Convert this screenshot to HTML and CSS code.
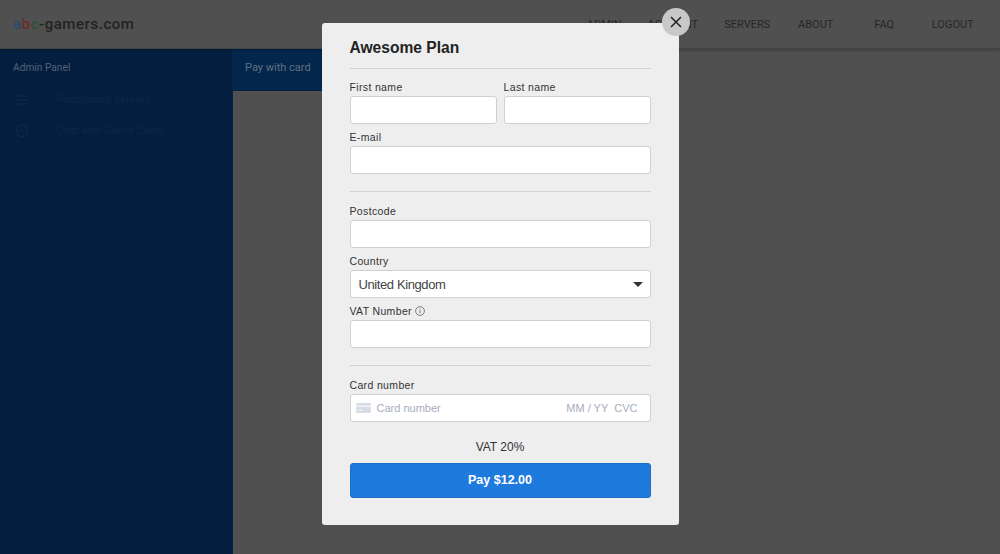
FILE: index.html
```html
<!DOCTYPE html>
<html lang="en">
<head>
    <meta charset="UTF-8">
    <meta name="viewport" content="width=device-width, initial-scale=1.0">
    <title>abc-gamers.com</title>
    <link rel="stylesheet" href="styles.css">
</head>
<body>
    <header id="navbar">
        <div id="logo"><span class="blue">a</span><span class="red">b</span><span class="green">c</span>-gamers.com</div>
        <nav id="links">
            <a href="">ADMIN</a>
            <a href="" class="tight">ACCOUNT</a>
            <a href="">SERVERS</a>
            <a href="">ABOUT</a>
            <a href="">FAQ</a>
            <a href="">LOGOUT</a>
        </nav>
    </header>

    <div id="main">
        <aside id="sidebar">
            <p class="side-title">Admin Panel</p>
            <div class="side-item">
                <svg width="14" height="10" viewBox="0 0 14 10"><path d="M1 1h12M1 5h12M1 9h12" stroke="#0c2748" stroke-width="1.500" fill="none"/></svg>
                <span>Purchasing Servers</span>
            </div>
            <div class="side-item">
                <svg width="14" height="14" viewBox="0 0 16 16"><circle cx="8" cy="8" r="6.500" stroke="#0c2748" stroke-width="1.500" fill="none"/><path d="M5 5l3 3 3-2" stroke="#0c2748" stroke-width="1.200" fill="none"/></svg>
                <span>Chat with Game Client</span>
            </div>
        </aside>
        <div id="content">
            <div id="pay-tab">Pay with card</div>
        </div>
    </div>

    <!-- Payment popup -->
    <div id="overlay">
        <div id="modal">
            <button type="button" id="close">
                <svg width="12" height="12" viewBox="0 0 12 12"><path d="M1 1l10 10M11 1L1 11" stroke="#222" stroke-width="1.500" fill="none"/></svg>
            </button>
            <h1>Awesome Plan</h1>
            <hr class="rule first-rule">
            <div class="row">
                <div class="field">
                    <label>First name</label>
                    <div class="input"></div>
                </div>
                <div class="field">
                    <label>Last name</label>
                    <div class="input"></div>
                </div>
            </div>
            <div class="field">
                <label>E-mail</label>
                <div class="input"></div>
            </div>
            <hr class="rule">
            <div class="field">
                <label>Postcode</label>
                <div class="input"></div>
            </div>
            <div class="field">
                <label>Country</label>
                <div class="input select">
                    <span>United Kingdom</span>
                    <i class="caret"></i>
                </div>
            </div>
            <div class="field">
                <label>VAT Number
                    <svg class="info-icon" width="10" height="10" viewBox="0 0 10 10"><circle cx="5" cy="5" r="4.400" stroke="#666" stroke-width="0.800" fill="none"/><path d="M5 4.300v3M5 2.400v1" stroke="#666" stroke-width="0.900"/></svg>
                </label>
                <div class="input"></div>
            </div>
            <hr class="rule">
            <div class="field">
                <label>Card number</label>
                <div class="input card">
                    <svg width="15" height="10" viewBox="0 0 16 11"><rect width="16" height="11" rx="1" fill="#d5dbe4"/><rect y="2.500" width="16" height="2" fill="#eef0f4"/><rect x="2" y="7" width="5" height="1.500" fill="#eef0f4"/></svg>
                    <span class="card-number">Card number</span>
                    <span>MM / YY</span>
                    <span class="cvc">CVC</span>
                </div>
            </div>
            <p id="vat">VAT 20%</p>
            <button type="button" id="pay">Pay $12.00</button>
        </div>
    </div>
</body>
</html>
```

FILE: styles.css
```css
* {
    margin: 0;
    padding: 0;
    box-sizing: border-box;
}

html, body {
    height: 100%;
    overflow: hidden;
}

body {
    display: flex;
    flex-direction: column;
    background-color: #505050;
    font-family: Roboto, "Liberation Sans", sans-serif;
}

#navbar {
    height: 49px;
    flex: none;
    display: flex;
    justify-content: space-between;
    align-items: center;
    background-color: #505050;
    border-bottom: 1px solid #444;
    box-shadow: 0px 1px 3px rgba(0, 0, 0, 0.3);
    position: relative;
    padding: 0 13px;
}

#logo {
    font-size: 15px;
    font-weight: 500;
    letter-spacing: 0.55px;
    color: #222;
}

.blue { color: #2d4a70; }
.red { color: #6e2b2b; }
.green { color: #2f4f33; }

#links {
    display: flex;
    height: 100%;
    align-items: center;
}

#links a {
    width: 68.5px;
    text-align: center;
    font-size: 11px;
    color: #272727;
    text-decoration: none;
}

#links a.tight {
    margin-right: 6px;
}

#main {
    flex: 1;
    display: flex;
}

#sidebar {
    width: 233px;
    background-color: #041e3f;
    padding: 13px;
    border-right: 1px solid #09233f;
}

.side-title {
    color: #566277;
    font-size: 10.200px;
    margin-bottom: 11px;
}

.side-item {
    display: flex;
    align-items: center;
    gap: 27px;
    height: 31px;
    padding-left: 2px;
    color: #0c2748;
    font-size: 11px;
}

#content {
    flex: 1;
}

#pay-tab {
    width: 90px;
    height: 42px;
    line-height: 38px;
    padding-left: 12px;
    font-size: 11px;
    color: #5f6f85;
    background-color: #03274c;
    border-bottom: 1px solid #04213f;
}

#overlay {
    position: absolute;
    top: 0;
    left: 0;
    width: 100%;
    height: 100%;
    display: flex;
    justify-content: center;
    align-items: flex-start;
    padding-top: 23px;
}

#modal {
    position: relative;
    width: 357px;
    height: 502px;
    background-color: #eeeeee;
    border-radius: 3px;
    padding: 0 28px;
    font-family: "Liberation Sans", Arial, sans-serif;
}

#close {
    position: absolute;
    top: -15px;
    right: -11px;
    width: 28px;
    height: 28px;
    border: none;
    border-radius: 50%;
    background-color: #c8c8c8;
    display: flex;
    align-items: center;
    justify-content: center;
}

h1 {
    font-size: 15.600px;
    font-weight: bold;
    color: #222;
    line-height: 20px;
    padding-top: 15px;
    height: 34px;
}

.rule {
    border: none;
    border-top: 1px solid #d2d2d2;
    margin: 17px 0 14px;
}

.first-rule {
    margin: 11px 0 13px;
}

.row {
    display: flex;
    gap: 7px;
}

.row .field {
    flex: 1;
}

.field {
    margin-bottom: 8px;
}

label {
    display: block;
    font-size: 10.500px;
    letter-spacing: 0.35px;
    line-height: 11px;
    color: #333;
    margin-bottom: 3px;
}

.info-icon {
    vertical-align: -1px;
}

.input {
    height: 28px;
    background-color: white;
    border: 1px solid #d0d0d0;
    border-radius: 3px;
}

.select {
    display: flex;
    justify-content: space-between;
    align-items: center;
    padding: 0 7px 0 8px;
    font-size: 13px;
    letter-spacing: -0.4px;
    color: #444;
}

.caret {
    width: 0;
    height: 0;
    border-left: 5px solid transparent;
    border-right: 5px solid transparent;
    border-top: 5px solid #333;
}

.card {
    display: flex;
    align-items: center;
    padding: 0 12px 0 5px;
    font-size: 11px;
    color: #a5aebb;
}

.card-number {
    flex: 1;
    margin-left: 6px;
}

.cvc {
    margin-left: 6px;
}

#vat {
    margin-top: 18px;
    text-align: center;
    font-size: 12px;
    line-height: 14px;
    color: #333;
}

#pay {
    display: block;
    width: 100%;
    height: 35px;
    margin-top: 9px;
    padding-bottom: 2px;
    background-color: #1f7ade;
    border: 1px solid #1b6fc9;
    border-radius: 3px;
    color: white;
    font-family: inherit;
    font-size: 12.500px;
    font-weight: bold;
}
```
